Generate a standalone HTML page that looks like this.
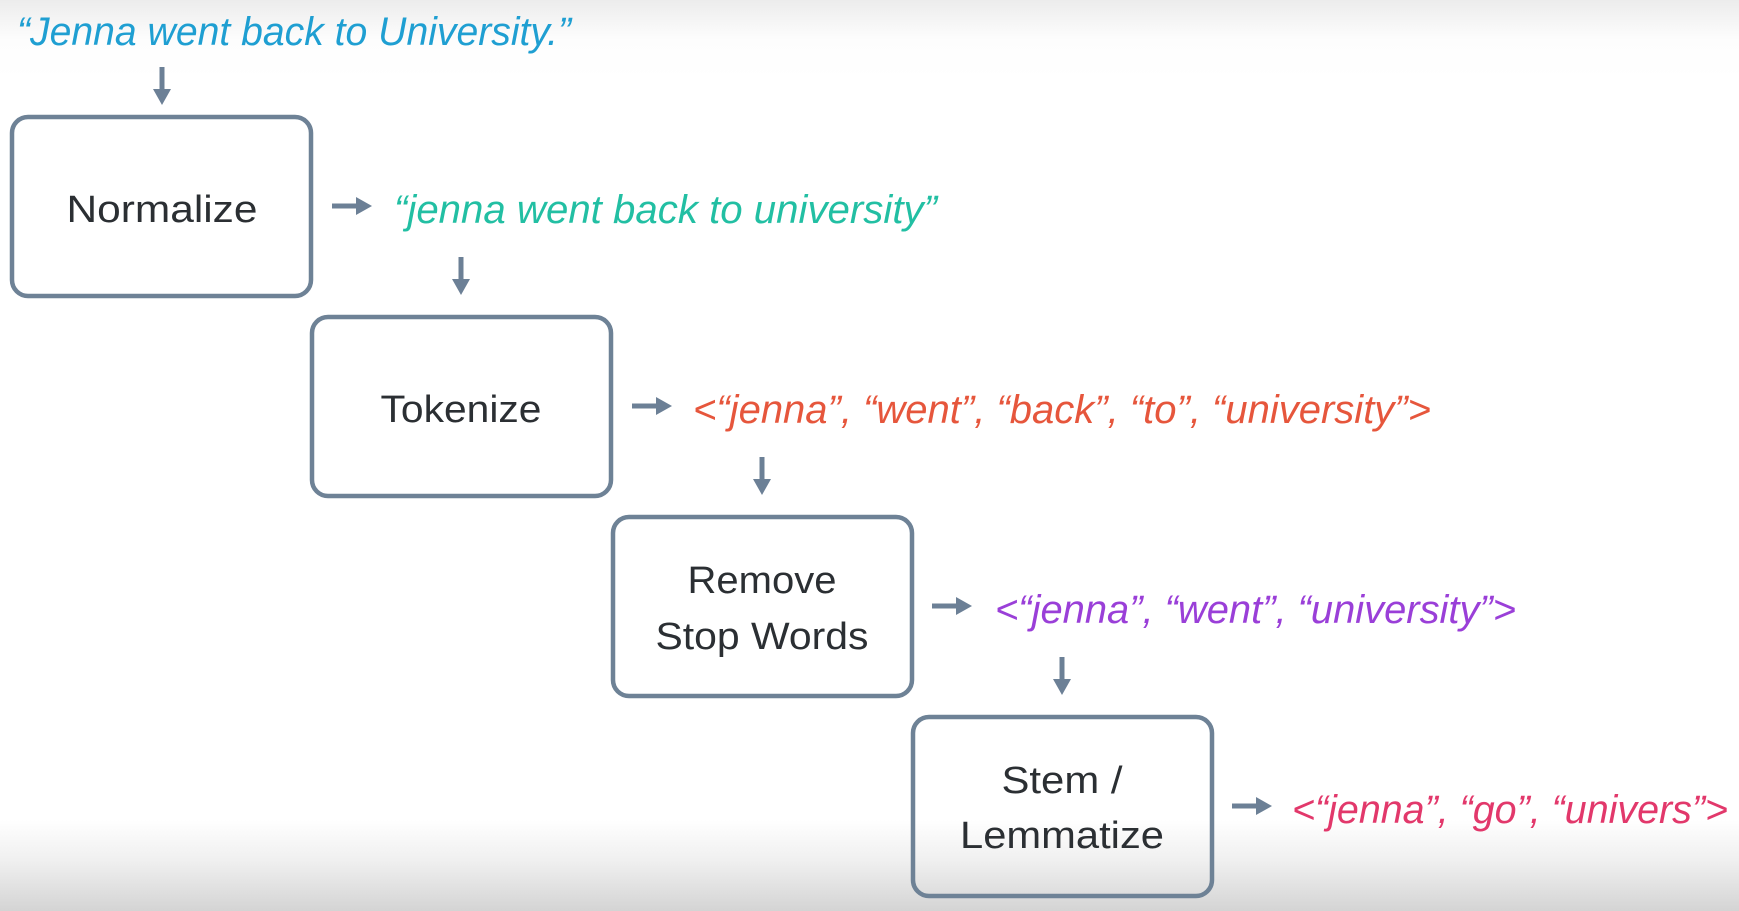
<!DOCTYPE html>
<html><head><meta charset="utf-8"><style>
html,body{margin:0;padding:0}
body{width:1739px;height:911px;overflow:hidden;background:linear-gradient(to bottom,#ececec 0px,#fdfdfd 40px,#fff 80px,#fff 820px,#f0f0f0 860px,#d4d4d4 911px)}
svg{position:absolute;left:0;top:0}
text{font-family:"Liberation Sans",sans-serif}
.lbl{font-size:38px;fill:#2b2f33;text-anchor:middle}
.it{font-style:italic;font-size:40px}
</style></head><body>
<svg width="1739" height="911" viewBox="0 0 1739 911">
<defs>
<g id="dn"><rect x="-2.5" y="0" width="5" height="26" fill="#6c8096"/><polygon points="-9,22 9,22 0,38" fill="#6c8096"/></g>
<g id="rt"><rect x="0" y="-2.5" width="28" height="5" fill="#6c8096"/><polygon points="24,-9 24,9 40,0" fill="#6c8096"/></g>
</defs>
<g fill="none" stroke="#6e8296" stroke-width="4.5">
<rect x="12" y="117" width="299" height="179" rx="16"/>
<rect x="312" y="317" width="299" height="179" rx="16"/>
<rect x="613" y="517" width="299" height="179" rx="16"/>
<rect x="913" y="717" width="299" height="179" rx="16"/>
</g>
<use href="#dn" x="162" y="67"/>
<use href="#dn" x="461" y="257"/>
<use href="#dn" x="762" y="457"/>
<use href="#dn" x="1062" y="657"/>
<use href="#rt" x="332" y="206"/>
<use href="#rt" x="632" y="406"/>
<use href="#rt" x="932" y="606"/>
<use href="#rt" x="1232" y="806"/>
<text class="it" x="17" y="45" fill="#1f9fd2" textLength="554" lengthAdjust="spacingAndGlyphs">“Jenna went back to University.”</text>
<text class="it" x="394" y="223" fill="#22bfa3" textLength="543" lengthAdjust="spacingAndGlyphs">“jenna went back to university”</text>
<text class="it" x="693" y="423" fill="#e6563c" textLength="738" lengthAdjust="spacingAndGlyphs">&lt;“jenna”, “went”, “back”, “to”, “university”&gt;</text>
<text class="it" x="995" y="623" fill="#9a3fd8" textLength="521" lengthAdjust="spacingAndGlyphs">&lt;“jenna”, “went”, “university”&gt;</text>
<text class="it" x="1292" y="823" fill="#e2386b" textLength="436" lengthAdjust="spacingAndGlyphs">&lt;“jenna”, “go”, “univers”&gt;</text>
<text class="lbl" x="162" y="222" textLength="191" lengthAdjust="spacingAndGlyphs">Normalize</text>
<text class="lbl" x="461" y="422" textLength="161" lengthAdjust="spacingAndGlyphs">Tokenize</text>
<text class="lbl" x="762" y="593" textLength="149" lengthAdjust="spacingAndGlyphs">Remove</text>
<text class="lbl" x="762" y="649" textLength="213" lengthAdjust="spacingAndGlyphs">Stop Words</text>
<text class="lbl" x="1062" y="793" textLength="121" lengthAdjust="spacingAndGlyphs">Stem /</text>
<text class="lbl" x="1062" y="848" textLength="204" lengthAdjust="spacingAndGlyphs">Lemmatize</text>
</svg>
</body></html>
